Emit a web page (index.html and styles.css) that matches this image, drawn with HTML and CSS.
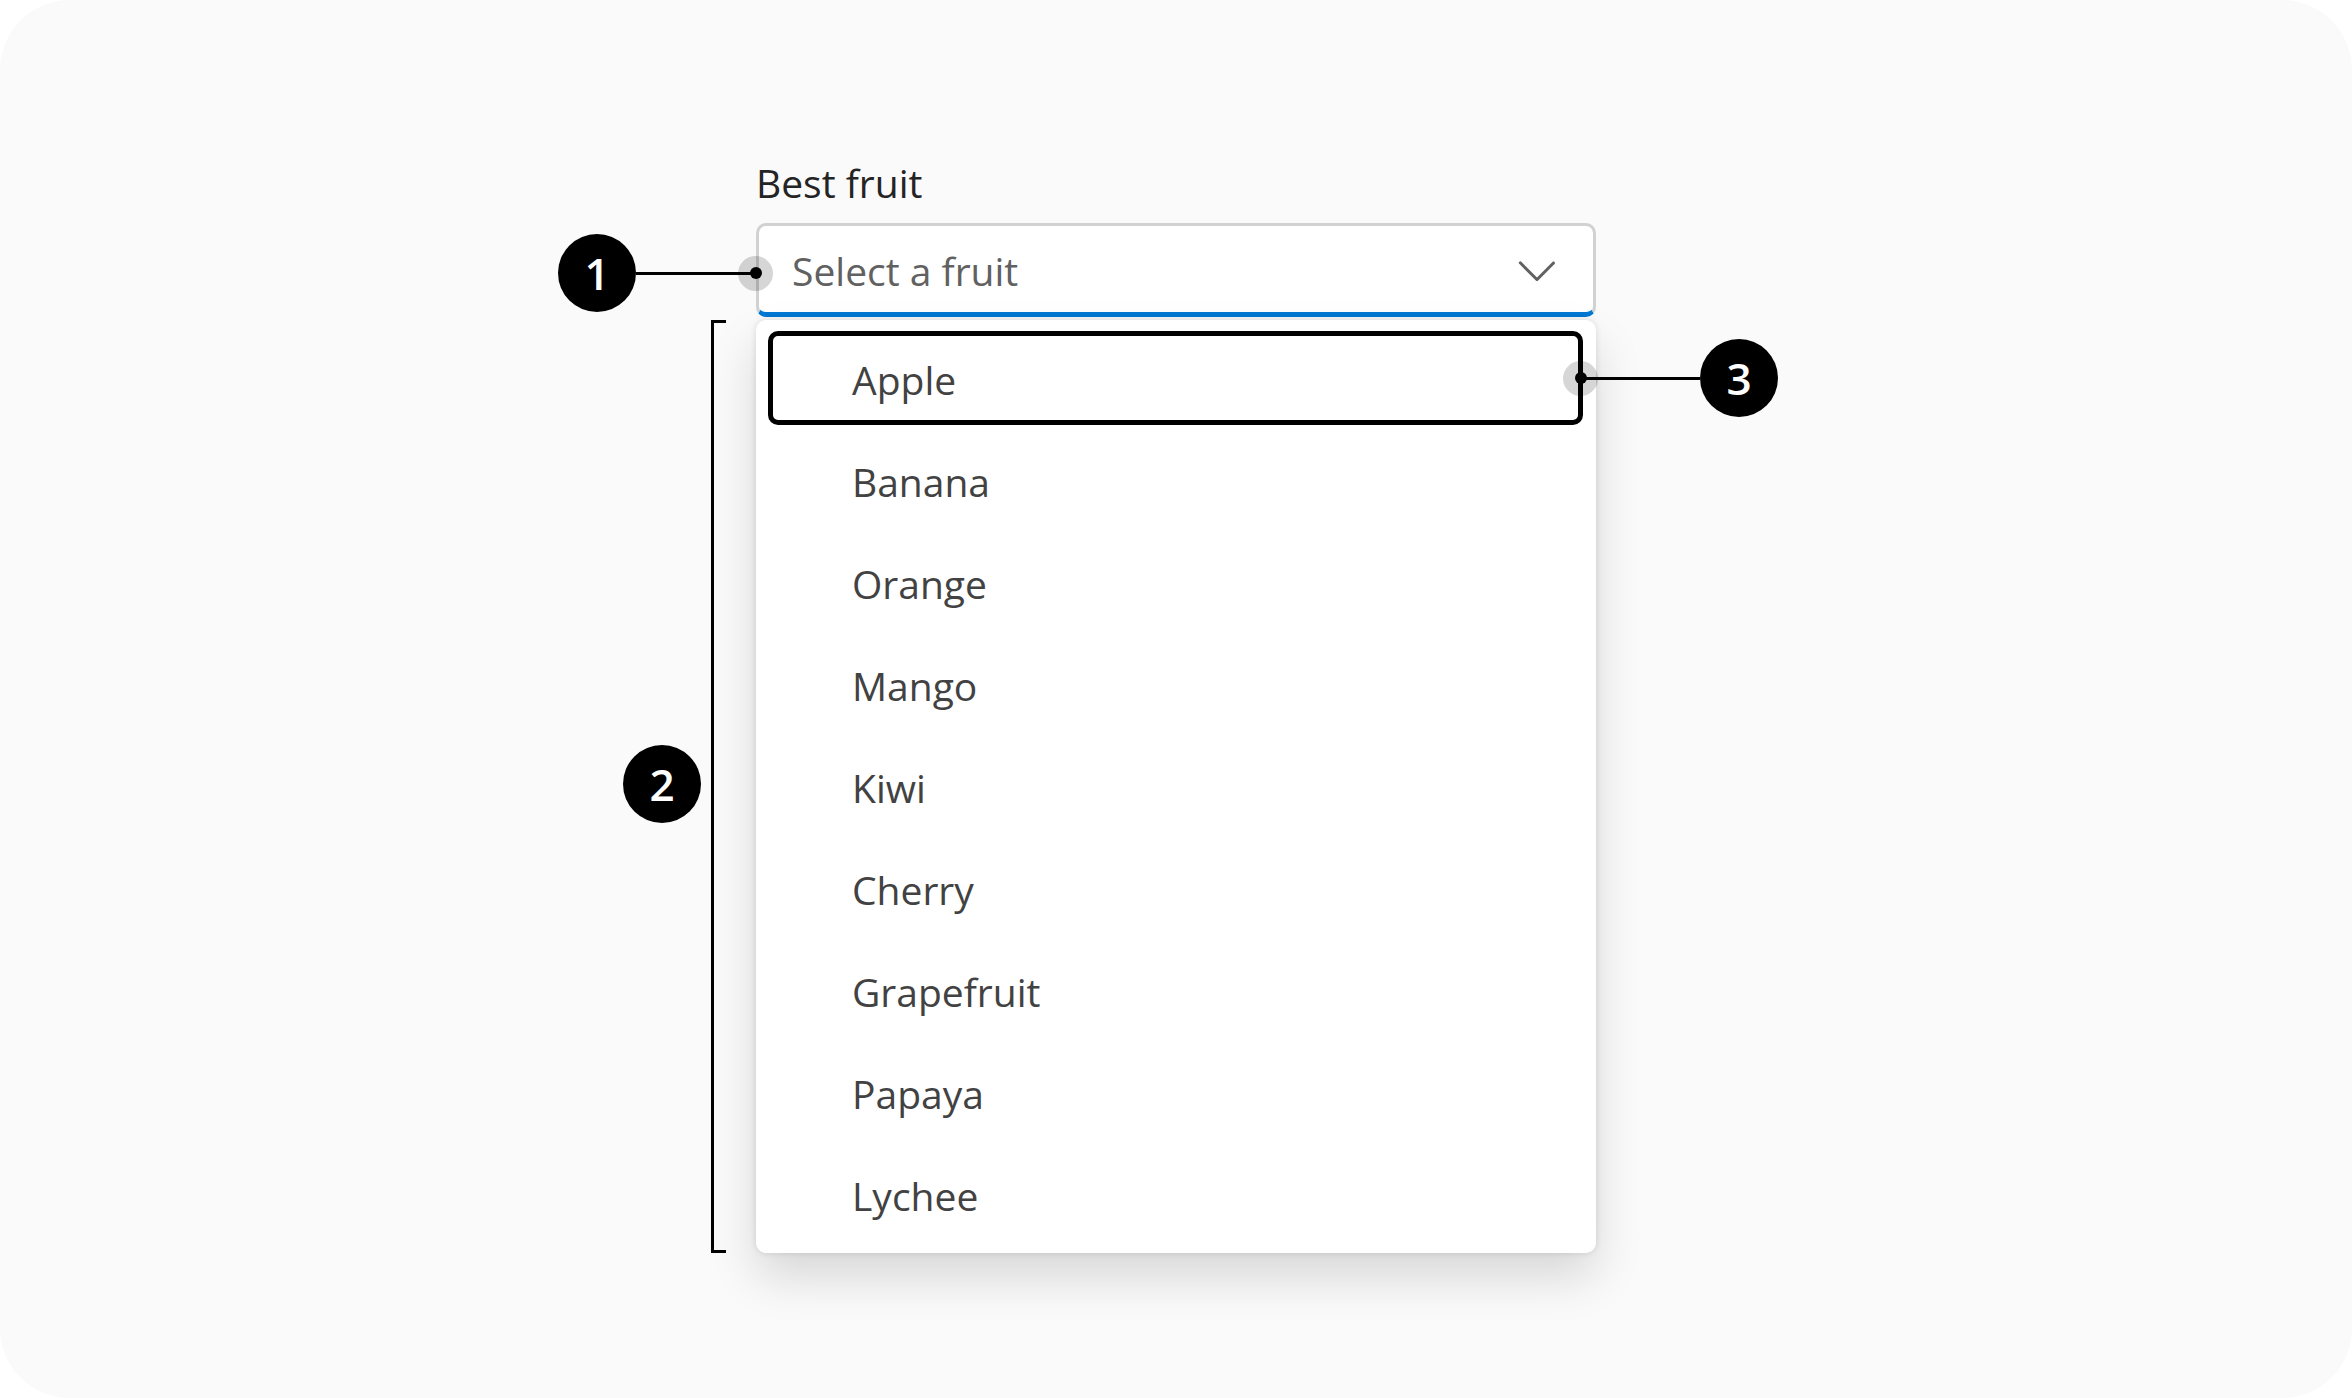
FILE: index.html
```html
<!DOCTYPE html>
<html lang="en">
  <head>
    <meta charset="UTF-8" />
    <meta name="viewport" content="width=device-width, initial-scale=1.0" />
    <link rel="stylesheet" href="styles.css">

    <title>Dropdown anatomy</title>
  </head>
  <body>
    <main class="canvas">
      <section class="field">
        <label class="label">Best fruit</label>

        <div class="dropdown">
          <span class="placeholder">Select a fruit</span>
          <svg class="chevron" viewBox="0 0 20 20" aria-hidden="true">
            <path d="M15.85 7.65c.2.2.2.5 0 .7l-5.46 5.49a.55.55 0 0 1-.78 0L4.15 8.35a.5.5 0 1 1 .7-.7L10 12.8l5.15-5.16c.2-.2.5-.2.7 0Z" />
          </svg>

          <div class="callout callout-left">
            <span class="badge">1</span>
            <span class="line"></span>
            <span class="pin"></span>
          </div>
        </div>

        <div class="listbox">
          <div class="option focused">
            Apple
            <div class="callout callout-right">
              <span class="pin"></span>
              <span class="line"></span>
              <span class="badge">3</span>
            </div>
          </div>
          <div class="option">Banana</div>
          <div class="option">Orange</div>
          <div class="option">Mango</div>
          <div class="option">Kiwi</div>
          <div class="option">Cherry</div>
          <div class="option">Grapefruit</div>
          <div class="option">Papaya</div>
          <div class="option">Lychee</div>

          <div class="bracket">
            <span class="badge">2</span>
          </div>
        </div>
      </section>
    </main>
  </body>
</html>
```

FILE: styles.css
```css
body,
html {
  margin: 0;
  padding: 0;
  background: #ffffff;
  font-family: "Open Sans", "Noto Sans", sans-serif;
}

.canvas {
  box-sizing: border-box;
  width: 100vw;
  height: 100vh;
  padding-top: 153px;
  padding-left: 756px;
  background: #fafafa;
  border-radius: 70px;
  overflow: hidden;
}

.field {
  width: 840px;
}

.label {
  display: block;
  height: 60px;
  margin-bottom: 10px;
  font-size: 39px;
  line-height: 60px;
  color: #242424;
}

.dropdown {
  position: relative;
  box-sizing: border-box;
  height: 94px;
  display: flex;
  align-items: center;
  justify-content: space-between;
  padding: 0 26px 0 33px;
  background: #ffffff;
  border: 3px solid #d1d1d1;
  border-bottom: 5px solid #0078d4;
  border-radius: 10px;
}

.placeholder {
  padding-top: 4px;
  font-size: 39px;
  line-height: 82px;
  color: #616161;
}

.chevron {
  width: 60px;
  height: 60px;
  fill: #616161;
}

.listbox {
  position: relative;
  margin-top: 3px;
  padding: 11px 13px 12px 12px;
  display: flex;
  flex-direction: column;
  gap: 8px;
  background: #ffffff;
  border-radius: 10px;
  box-shadow: 0 0 6px rgba(0, 0, 0, 0.12), 0 24px 48px rgba(0, 0, 0, 0.14);
}

.option {
  position: relative;
  box-sizing: border-box;
  height: 94px;
  padding: 3px 0 0 79px;
  border: 5px solid transparent;
  border-radius: 10px;
  font-size: 39px;
  line-height: 81px;
  color: #424242;
}

.focused {
  border-color: #000000;
}

/* annotation callouts */
.callout {
  position: absolute;
  display: flex;
  align-items: center;
}

.callout-left {
  top: 8px;
  right: calc(100% - 14px);
}

.callout-right {
  top: 50%;
  left: calc(100% - 15px);
  transform: translateY(-50%);
}

.badge {
  width: 78px;
  height: 78px;
  flex: none;
  display: flex;
  align-items: center;
  justify-content: center;
  border-radius: 50%;
  background: #000000;
  color: #ffffff;
  font-size: 44px;
  font-weight: 600;
  line-height: 1;
}

.line {
  width: 119px;
  height: 3px;
  flex: none;
  background: #000000;
}

.callout-right .line {
  margin-left: -17px;
}

.pin {
  position: relative;
  width: 35px;
  height: 35px;
  flex: none;
  border-radius: 50%;
  background: rgba(0, 0, 0, 0.16);
}

.callout-left .pin {
  margin-left: -17px;
}

.pin::after {
  content: "";
  position: absolute;
  top: 11.5px;
  left: 11.5px;
  width: 12px;
  height: 12px;
  border-radius: 50%;
  background: #000000;
}

.bracket {
  position: absolute;
  top: 0;
  bottom: 0;
  right: calc(100% + 30px);
  width: 12px;
  border: 3px solid #000000;
  border-right: none;
}

.bracket .badge {
  position: absolute;
  top: 50%;
  right: calc(100% + 13px);
  margin-top: -3px;
  transform: translateY(-50%);
}
```
